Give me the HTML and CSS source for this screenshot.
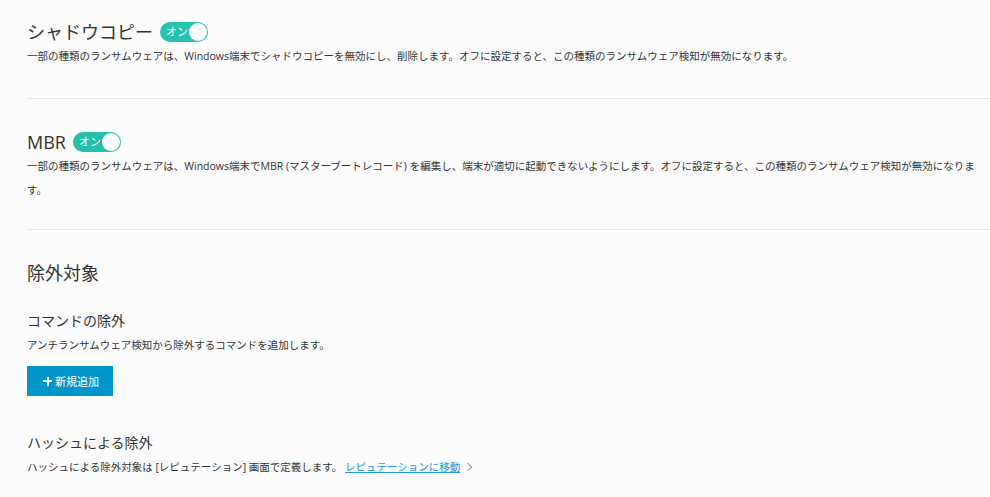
FILE: index.html
```html
<!doctype html>
<html lang="ja">
<head>
  <meta charset="UTF-8">
  <title>アンチランサムウェア設定</title>
  <link rel="stylesheet" href="styles.css">
</head>
<body>

  <div class="settings">
    <div class="section first">
      <h2 class="title">シャドウコピー <span class="toggle"><span class="label">オン</span><span class="knob"></span></span></h2>
      <p class="desc">一部の種類のランサムウェアは、Windows端末でシャドウコピーを無効にし、削除します。オフに設定すると、この種類のランサムウェア検知が無効になります。</p>
    </div>

    <div class="section">
      <h2 class="title">MBR <span class="toggle"><span class="label">オン</span><span class="knob"></span></span></h2>
      <p class="desc">一部の種類のランサムウェアは、Windows端末でMBR (マスターブートレコード) を編集し、端末が適切に起動できないようにします。オフに設定すると、この種類のランサムウェア検知が無効になります。</p>
    </div>

    <div class="exclusions">
      <h2 class="title">除外対象</h2>

      <div class="group">
        <h3 class="subtitle">コマンドの除外</h3>
        <p class="desc">アンチランサムウェア検知から除外するコマンドを追加します。</p>
        <button class="add" type="button"><span class="plus"></span>新規追加</button>
      </div>

      <div class="group">
        <h3 class="subtitle">ハッシュによる除外</h3>
        <p class="desc">ハッシュによる除外対象は [レピュテーション] 画面で定義します。 <a href="#" class="link">レピュテーションに移動</a><span class="chevron"></span></p>
      </div>
    </div>
  </div>

</body>
</html>
```

FILE: styles.css
```css
html, body {
  height: 100%;
}
body {
  margin: 0;
  background: #fcfcfc;
  color: #333;
  font-family: "Open Sans", "Noto Sans CJK JP", sans-serif;
}
.settings {
  padding-left: 27px;
}
h2, h3, p {
  margin: 0;
  font-weight: normal;
}
.section {
  padding: 31px 10px 27px 0;
  border-bottom: 1px solid #e6e6e6;
}
.section.first {
  padding-top: 20px;
  padding-bottom: 30px;
}
.title {
  display: flex;
  align-items: center;
  height: 24px;
  font-size: 18px;
  line-height: 24px;
}
.desc {
  font-size: 10.5px;
  line-height: 24px;
}
.toggle {
  position: relative;
  display: inline-block;
  width: 48px;
  height: 20px;
  margin-left: 7px;
  border-radius: 10px;
  background: #27bfae;
}
.toggle .label {
  position: absolute;
  left: 6px;
  top: 0;
  font-size: 11px;
  line-height: 20px;
  color: #fff;
}
.toggle .knob {
  position: absolute;
  right: 1px;
  top: 1px;
  width: 18px;
  height: 18px;
  border-radius: 50%;
  background: #fff;
}
.exclusions {
  padding-top: 31px;
}
.group {
  padding-top: 24px;
}
.subtitle {
  font-size: 14px;
  line-height: 24px;
}
.add {
  display: flex;
  align-items: center;
  height: 30px;
  margin-top: 9px;
  padding: 0 14px 0 16px;
  border: 0;
  background: #0096c9;
  color: #fff;
  font-family: inherit;
  font-size: 11px;
  cursor: pointer;
}
.plus {
  position: relative;
  width: 9px;
  height: 9px;
  margin-right: 3px;
}
.plus:before,
.plus:after {
  content: '';
  position: absolute;
  background: #fff;
}
.plus:before {
  left: 0; right: 0;
  top: 3.5px;
  height: 2px;
}
.plus:after {
  top: 0; bottom: 0;
  left: 3.5px;
  width: 2px;
}
.group + .group {
  padding-top: 35px;
}
.link {
  color: #1a96cc;
  text-decoration: underline;
}
.chevron {
  display: inline-block;
  width: 5px;
  height: 5px;
  margin-left: 5px;
  border-top: 1px solid #7a9ab0;
  border-right: 1px solid #7a9ab0;
  transform: rotate(45deg);
  vertical-align: 1px;
}
```
